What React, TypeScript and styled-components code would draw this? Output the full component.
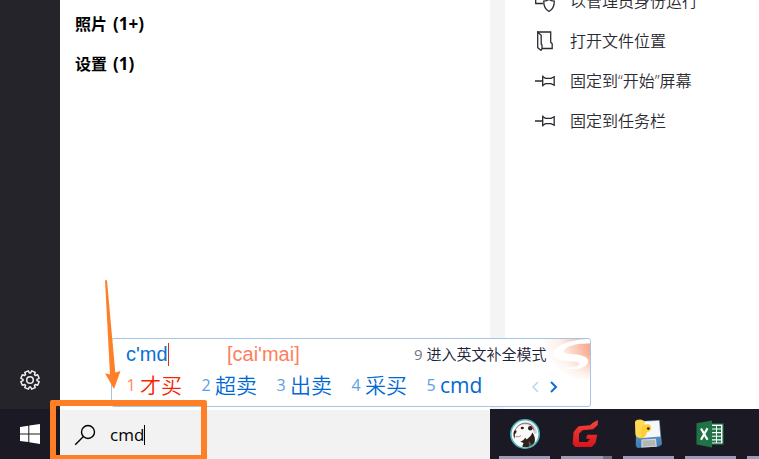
import React from 'react';
import styled, { createGlobalStyle } from 'styled-components';

const GlobalStyle = createGlobalStyle`
  * { box-sizing: border-box; }
  body {
    margin: 0;
    overflow: hidden;
    background: #fff;
    font-family: "Open Sans", "Noto Sans CJK SC", sans-serif;
    font-size: 16px;
  }
  button, input { font: inherit; color: inherit; border: 0; padding: 0; margin: 0; background: none; }
  svg { display: block; flex: none; }
`;

const Screen = styled.div`
  position: relative;
  display: flex;
  flex-direction: column;
  height: 100vh;
  overflow: hidden;
`;

const StartMenu = styled.div`
  flex: 1;
  min-height: 0;
  display: grid;
  grid-template-columns: 60px 430px 15px 1fr;
  overflow: hidden;
`;

const Rail = styled.nav`
  display: flex;
  flex-direction: column;
  justify-content: flex-end;
  align-items: center;
  padding-bottom: 18px;
  background: #25242a;
`;

const RailButton = styled.button`
  display: flex;
  color: #f1f1f3;
`;

const Results = styled.main`
  padding: 4px 15px;
`;

const GroupTitle = styled.h2`
  display: flex;
  gap: 6px;
  margin: 0;
  font-size: 16px;
  font-weight: 700;
  line-height: 40px;
  color: #000;
`;

const Count = styled.span`
  font-size: 17px;
`;

const Gutter = styled.div`
  background: #f4f4f4;
`;

const Actions = styled.aside`
  overflow: hidden;
  padding-left: 30px;
`;

const ActionList = styled.div`
  display: flex;
  flex-direction: column;
  margin-top: -19px;
`;

const Action = styled.button`
  display: flex;
  align-items: center;
  gap: 15px;
  height: 40px;
  line-height: 24px;
  font-weight: 350;
  color: #2b2a32;
  white-space: nowrap;
`;

const Taskbar = styled.footer`
  display: grid;
  grid-template-columns: 60px 430px 1fr;
  height: 50px;
  background: #1b1a24;
`;

const StartButton = styled.button`
  display: grid;
  place-items: center;
  color: #fff;
`;

const SearchBox = styled.label`
  display: flex;
  align-items: center;
  padding-left: 14px;
  border-top: 1px solid #fff;
  background: #f2f2f2;
  color: #000;
`;

const SearchInput = styled.input`
  field-sizing: content;
  margin-left: 14px;
  outline: 0;
  caret-color: transparent;
  font-size: 17px;
  line-height: 24px;
`;

const Caret = styled.span<{ $color: string; $height: number }>`
  flex: none;
  width: 1px;
  height: ${p => p.$height}px;
  background: ${p => p.$color};
`;

const Apps = styled.div`
  display: flex;
  gap: 11px;
  padding-left: 9px;
  overflow: hidden;
`;

const AppButton = styled.button<{ $stacked?: boolean }>`
  flex: none;
  display: grid;
  place-items: center;
  width: 51px;
  border-bottom: 3px solid #9c9bb8;
  padding-top: 3px;
  ${p => p.$stacked && `
    border-image: linear-gradient(to right, #9c9bb8 40px, #727188 40px) 3;
  `}
`;

const Ime = styled.section`
  position: absolute;
  left: 111px;
  bottom: 52px;
  width: 480px;
  border: 1px solid #a5c5e6;
  border-radius: 3px;
  background: #fff;
  padding: 2px 14px 3px;
  overflow: hidden;
`;

const ImeLogo = styled.svg`
  position: absolute;
  top: 0;
  right: 0;
`;

const Composition = styled.div`
  position: relative;
  display: grid;
  grid-template-columns: 101px 187px 1fr;
  align-items: center;
  height: 26px;
  font-family: "Liberation Sans", sans-serif;
  font-size: 20px;
`;

const Typed = styled.span`
  display: flex;
  align-items: center;
  color: #0b6fd6;
`;

const Pinyin = styled.span`
  color: #ff7d5c;
`;

const ModeButton = styled.button`
  display: flex;
  align-items: center;
  gap: 4px;
  font-family: "Open Sans", "Noto Sans CJK SC", sans-serif;
  font-size: 15px;
  font-weight: 350;
  line-height: 22px;
  color: #1c2238;
  white-space: nowrap;
`;

const ModeKey = styled.span`
  font-weight: 400;
  color: #75757d;
`;

const Candidates = styled.div`
  position: relative;
  display: flex;
  align-items: center;
  height: 36px;
`;

const Candidate = styled.button<{ $active?: boolean; $latin?: boolean }>`
  flex: none;
  display: flex;
  align-items: center;
  gap: 4px;
  width: 75px;
  font-size: 21px;
  font-weight: ${p => (p.$latin ? 400 : 350)};
  line-height: 32px;
  color: ${p => (p.$active ? '#f72400' : '#0068d4')};
`;

const CandidateKey = styled.span<{ $active?: boolean }>`
  width: 10px;
  font-size: 16px;
  font-weight: 400;
  color: ${p => (p.$active ? '#ff8662' : '#5c9fe4')};
`;

const Pager = styled.div`
  display: flex;
  gap: 10px;
  margin: 4px 0 0 30px;
`;

const PageButton = styled.button<{ $muted?: boolean }>`
  display: flex;
  color: ${p => (p.$muted ? '#b9d7f5' : '#0b6fd6')};
`;

const Arrow = styled.svg`
  position: absolute;
  left: 104px;
  bottom: 70px;
`;

const Highlight = styled.div`
  position: absolute;
  left: 50px;
  bottom: -2px;
  width: 157px;
  height: 61px;
  border: 6px solid #ff7f27;
  border-radius: 2px;
  pointer-events: none;
`;

const gearPath = (() => {
  const points: string[] = [];
  const teeth = 8;
  for (let i = 0; i < teeth; i++) {
    const steps: [number, number][] = [[-0.3, 7], [-0.21, 9.3], [0.21, 9.3], [0.3, 7]];
    for (const [offset, radius] of steps) {
      const a = ((i + 0.5) / teeth) * Math.PI * 2 + offset;
      points.push(`${(10 + radius * Math.cos(a)).toFixed(2)} ${(10 + radius * Math.sin(a)).toFixed(2)}`);
    }
  }
  return `M${points.join('L')}Z`;
})();

const GearIcon = () => (
  <svg width="22" height="22" viewBox="-1 -1 22 22" fill="none" stroke="currentColor" strokeWidth="1.5" strokeLinejoin="round">
    <path d={gearPath} />
    <circle cx="10" cy="10" r="3.3" />
  </svg>
);

const WindowsIcon = () => (
  <svg width="20" height="20" viewBox="0 0 20 20" fill="currentColor">
    <path d="M0 3 8.300 1.800V9.400H0ZM9.300 1.600 20 0V9.400H9.300ZM0 10.400H8.300V18L0 16.900ZM9.300 10.400H20V20L9.300 18.200Z" />
  </svg>
);

const SearchIcon = () => (
  <svg width="22" height="22" viewBox="0 0 22 22" fill="none" stroke="currentColor" strokeWidth="1.4">
    <circle cx="14" cy="8" r="6.5" />
    <path d="M9.400 12.600 1.200 20.800" />
  </svg>
);

const ShieldIcon = () => (
  <svg width="20" height="20" viewBox="0 0 20 20" fill="none" stroke="currentColor" strokeWidth="1.3" overflow="visible">
    <path d="M8 12.500H.7V2.500H18V7" />
    <path d="M14 8.500c-1.600 1.200-3 1.600-5.300 1.600 0 4.900 1.500 8.600 5.300 10.400 3.800-1.800 5.300-5.500 5.300-10.400-2.300 0-3.700-.4-5.300-1.600Z" />
  </svg>
);

const FolderIcon = () => (
  <svg width="20" height="20" viewBox="0 0 20 20" fill="none" stroke="currentColor" strokeWidth="1.3">
    <path d="M2.700 1h13v10.200l1.500 1.600v4.700H7" />
    <path d="M2.700 1v15.800l3.300 2.500 1-1.800v-3.500l-.8-.8V4.200Z" />
  </svg>
);

const PinIcon = () => (
  <svg width="20" height="20" viewBox="0 0 20 20" fill="none" stroke="currentColor" strokeWidth="1.3">
    <path d="M0 10h7.500M7.700 4.500v11M7.700 5.500l2.800 1.800h5.500l3.200-1.600v8.600l-3.200-1.600h-5.500l-2.800 1.800" />
  </svg>
);

const BeaverIcon = () => (
  <svg width="30" height="30" viewBox="0 0 30 30">
    <circle cx="15" cy="15" r="14.200" fill="#fbfaf9" stroke="#45b4bd" strokeWidth="1.600" />
    <path d="M5.500 10C8 4.500 13 2.600 18 3.300c5.500 1 9 5.500 9 11l-3.200 1c.2-5-2.600-8.500-6.800-9.200C12.500 5.300 8.500 6.500 5.500 10Z" fill="#d9d5d2" />
    <path d="M5 11.500C7.500 6 12 4 16 4.300c4 .2 7.300 2.500 8 7.200" fill="none" stroke="#6b5b55" strokeWidth=".8" />
    <ellipse cx="12.300" cy="9" rx="1.600" ry="1.300" fill="#2e201d" />
    <ellipse cx="20.300" cy="9.300" rx="2.300" ry="2.200" fill="#2e201d" />
    <path d="M4.400 11.500c1.600-.6 2.600.3 2 1.800L4.800 15.500v4.200C3 17.200 3 13.500 4.400 11.500Z" fill="#2e201d" />
    <path d="M5.500 17.300c2 .8 3.800.6 5.500-.8" fill="none" stroke="#83736d" strokeWidth=".8" />
    <path d="M22.300 13.500c2.600 3 3.200 7 2.200 10.200-2.800 3.800-7.500 5.300-12.300 4l1.300-3.800-3.300-1.300c2.500-.8 3.800-1.700 5-3.800l1.500 1.600c2.300-1.600 4.600-3.800 5.600-6.900Z" fill="#2e201d" />
    <path d="m18.500 22 .6 5.200c1.200-.4 2-1 2.600-1.600Z" fill="#6a5953" />
  </svg>
);

const GIcon = () => (
  <svg width="30" height="30" viewBox="0 0 30 30">
    <defs>
      <linearGradient id="g-red" x1="0" y1="0" x2="0" y2="1">
        <stop offset="0" stopColor="#f5453b" />
        <stop offset="1" stopColor="#d8141b" />
      </linearGradient>
    </defs>
    <path d="M1.500 13 6.500 7.200 18 6.300 20.500 4 25.800 1v5L21 10.300 10.500 11.300 7 14.700V23h8.500l2.500-3.300h-4l1.300-4h9.900l-1.700 8.300-3.800 3.900H3.300L.7 25Z" fill="url(#g-red)" />
  </svg>
);

const PyFloppyIcon = () => (
  <svg width="30" height="30" viewBox="0 0 30 30">
    <defs>
      <linearGradient id="floppy" x1="0" y1="0" x2="0" y2="1">
        <stop offset="0" stopColor="#83acd0" />
        <stop offset="1" stopColor="#397bb5" />
      </linearGradient>
    </defs>
    <path d="M2 2.500 25.500 1 28 25.500 25 27.500 3.500 29 1.800 27Z" fill="url(#floppy)" />
    <path d="M7 2.500 25 2 26.300 17.500 8 19Z" fill="#f5f7f9" />
    <path d="m7.500 20.500 14.500-.7.800 8-15.500.6Z" fill="#d6d8d9" />
    <path d="m8.500 21.500 12.500-.5.500 6-13 .6Z" fill="#b3b5b7" />
    <path d="M1 3C2 0 7 0 9.500 1.500c1.200 1 1 3 1 4.500 2.500-1.300 6-.8 6.500 1.200.6 3.300-.8 5.700-4 5.700-.6 3.200-2.400 6-6 6.300C3.500 19 1.500 17.500 1.500 15Z" fill="#ffd034" />
    <path d="M1 3c2-1.800 6-2.200 9-.6L10 6 7.500 7.500 7 17 5 18.300c-1.800-.4-3.200-1.500-3.400-3.300Z" fill="#ffe16b" opacity=".6" />
    <circle cx="14.300" cy="9.600" r="1.400" fill="#3d2d16" />
  </svg>
);

const SheetIcon = () => (
  <svg width="30" height="28" viewBox="0 0 30 28">
    <rect x="12" y="4" width="15" height="20" fill="#fff" stroke="#207347" strokeWidth="1.200" />
    <path d="M16 6h4v2.500h-4ZM21 6h4v2.500h-4ZM16 9.600h4v2.500h-4ZM21 9.600h4v2.500h-4ZM16 13.200h4v2.500h-4ZM21 13.200h4v2.500h-4ZM16 16.800h4v2.500h-4ZM21 16.800h4v2.500h-4ZM16 20.400h4v2h-4ZM21 20.400h4v2h-4Z" fill="#207347" />
    <path d="M.5 3.200 16 .5v27L.5 24.600Z" fill="#207347" />
    <path d="m5 8.500 6.500 11.200M11.500 8.200 5 19.700" stroke="#fff" strokeWidth="2.200" />
  </svg>
);

const ChatIcon = () => (
  <svg width="28" height="28" viewBox="0 0 28 28">
    <circle cx="14" cy="14" r="14" fill="#12a76c" />
  </svg>
);

const ChevronIcon = ({ back }: { back?: boolean }) => (
  <svg width="9" height="12" viewBox="0 0 9 12" fill="none" stroke="currentColor" strokeWidth={back ? 1.5 : 2}>
    <path d={back ? 'M7 1 2 6l5 5' : 'm1 1 5 5-5 5'} />
  </svg>
);

const candidates = ['才买', '超卖', '出卖', '采买', 'cmd'];

const actions = [
  { label: '以管理员身份运行', Icon: ShieldIcon },
  { label: '打开文件位置', Icon: FolderIcon },
  { label: '固定到“开始”屏幕', Icon: PinIcon },
  { label: '固定到任务栏', Icon: PinIcon },
];

const apps = [
  { name: 'DBeaver', Icon: BeaverIcon },
  { name: 'G', Icon: GIcon, stacked: true },
  { name: 'Python', Icon: PyFloppyIcon },
  { name: 'Excel', Icon: SheetIcon },
  { name: 'Chat', Icon: ChatIcon },
];

export default function App() {
  const [query, setQuery] = React.useState('cmd');
  return (
    <Screen lang="zh-CN">
      <GlobalStyle />
      <StartMenu>
        <Rail>
          <RailButton aria-label="设置"><GearIcon /></RailButton>
        </Rail>
        <Results>
          <GroupTitle>照片 <Count>(1+)</Count></GroupTitle>
          <GroupTitle>设置 <Count>(1)</Count></GroupTitle>
        </Results>
        <Gutter />
        <Actions>
          <ActionList>
            {actions.map(({ label, Icon }) => (
              <Action key={label}><Icon />{label}</Action>
            ))}
          </ActionList>
        </Actions>
      </StartMenu>
      <Taskbar>
        <StartButton aria-label="开始"><WindowsIcon /></StartButton>
        <SearchBox>
          <SearchIcon />
          <SearchInput aria-label="搜索" value={query} onChange={e => setQuery(e.target.value)} />
          <Caret $color="#000" $height={20} />
        </SearchBox>
        <Apps>
          {apps.map(({ name, Icon, stacked }) => (
            <AppButton key={name} aria-label={name} $stacked={stacked}><Icon /></AppButton>
          ))}
        </Apps>
      </Taskbar>
      <Ime>
        <ImeLogo width="50" height="42" viewBox="0 0 50 42">
          <defs>
            <linearGradient id="flame" x1="0" y1="0.200" x2="1" y2="0">
              <stop offset="0" stopColor="#fff" />
              <stop offset=".4" stopColor="#fdeee8" />
              <stop offset="1" stopColor="#f7a384" />
            </linearGradient>
            <linearGradient id="fade" x1="0" y1="0" x2="0" y2="1">
              <stop offset=".35" stopColor="#fff" stopOpacity="0" />
              <stop offset="1" stopColor="#fff" />
            </linearGradient>
          </defs>
          <path d="M2 0H50V39C32 44 10 30 2 0Z" fill="url(#flame)" />
          <path d="M0 0H50V42H0Z" fill="url(#fade)" />
          <path d="M50 0C33 0 15 6 13 14c-1 6 7 7.500 16 8 8 .5 12 1.500 10 4-2 2.300-8 3-18 2.500 12 3.800 25 1 27-5 1.500-5.500-6-7.500-15-8.200-7-.6-11-1.300-9-4.300C26.500 7 37 4 50 4.500Z" fill="#fff" />
        </ImeLogo>
        <Composition>
          <Typed>c'md<Caret $color="#d8311b" $height={23} /></Typed>
          <Pinyin>[cai'mai]</Pinyin>
          <ModeButton><ModeKey>9</ModeKey>进入英文补全模式</ModeButton>
        </Composition>
        <Candidates>
          {candidates.map((word, i) => (
            <Candidate key={word} $active={i === 0} $latin={/^[a-z]+$/.test(word)}>
              <CandidateKey $active={i === 0}>{i + 1}</CandidateKey>{word}
            </Candidate>
          ))}
          <Pager>
            <PageButton $muted aria-label="上一页"><ChevronIcon back /></PageButton>
            <PageButton aria-label="下一页"><ChevronIcon /></PageButton>
          </Pager>
        </Candidates>
      </Ime>
      <Highlight />
      <Arrow width="18" height="109" viewBox="0 0 18 109" fill="#ff7f27">
        <path d="M1 .5 2 0 3 .5 11.300 92.500 16.500 91 10 109 1 93.300 6 94.500Z" />
      </Arrow>
    </Screen>
  );
}
